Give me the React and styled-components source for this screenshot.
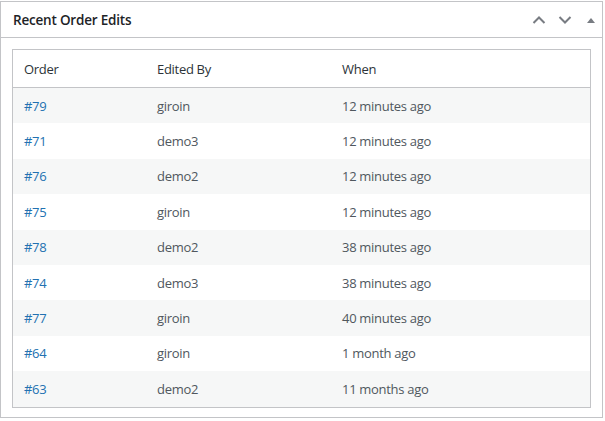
import React from "react";
import styled, { createGlobalStyle } from "styled-components";

const GlobalStyle = createGlobalStyle`
  body {
    margin: 0;
    background: #fff;
    font-family: "Open Sans", "Noto Sans", sans-serif;
  }
`;

const Postbox = styled.div`
  box-sizing: border-box;
  margin-top: 1px;
  width: 603px;
  height: 417px;
  border: 1px solid #c3c4c7;
  background: #fff;
`;

const Header = styled.div`
  display: flex;
  align-items: center;
  justify-content: space-between;
  height: 35px;
  border-bottom: 1px solid #c3c4c7;
  padding: 0 0 0 12px;
`;

const Title = styled.h2`
  margin: 0;
  font-size: 13.5px;
  font-weight: 600;
  color: #1d2327;
  letter-spacing: -0.2px;
`;

const Handles = styled.div`
  display: flex;
  align-items: center;
  gap: 4px;
`;

const HandleButton = styled.button`
  width: 22px;
  height: 26px;
  padding: 0;
  border: 0;
  background: none;
  display: flex;
  align-items: center;
  justify-content: center;
  color: #787c82;
`;

const Inside = styled.div`
  padding: 11px 11px;
`;

const Table = styled.table`
  width: 100%;
  border-collapse: collapse;
  border: 1px solid #c3c4c7;
  font-size: 13px;
  color: #50575e;
  letter-spacing: -0.3px;
`;

const Th = styled.th`
  text-align: left;
  font-weight: 400;
  color: #2c3338;
  height: 37px;
  padding: 0 11px;
  border-bottom: 1px solid #c3c4c7;
  width: ${(p) => p.$w || "auto"};
`;

const Row = styled.tr`
  background: ${(p) => (p.$alt ? "#f6f7f7" : "#fff")};
`;

const Td = styled.td`
  height: 35.4px;
  padding: 0 11px;
`;

const Link = styled.a`
  color: #2271b1;
  text-decoration: none;
`;

const rows = [
  ["#79", "giroin", "12 minutes ago"],
  ["#71", "demo3", "12 minutes ago"],
  ["#76", "demo2", "12 minutes ago"],
  ["#75", "giroin", "12 minutes ago"],
  ["#78", "demo2", "38 minutes ago"],
  ["#74", "demo3", "38 minutes ago"],
  ["#77", "giroin", "40 minutes ago"],
  ["#64", "giroin", "1 month ago"],
  ["#63", "demo2", "11 months ago"],
];

export default function App() {
  return (
    <>
      <GlobalStyle />
      <Postbox>
        <Header>
          <Title>Recent Order Edits</Title>
          <Handles>
            <HandleButton aria-label="Move up">
              <svg width="14" height="14" viewBox="0 0 14 14">
                <path d="M1.5 10 L7 4.5 L12.5 10" fill="none" stroke="currentColor" strokeWidth="2" />
              </svg>
            </HandleButton>
            <HandleButton aria-label="Move down">
              <svg width="14" height="14" viewBox="0 0 14 14">
                <path d="M1.5 4 L7 9.5 L12.5 4" fill="none" stroke="currentColor" strokeWidth="2" />
              </svg>
            </HandleButton>
            <HandleButton aria-label="Toggle panel">
              <svg width="10" height="10" viewBox="0 0 10 10">
                <path d="M1 8 L5 3 L9 8 Z" fill="currentColor" />
              </svg>
            </HandleButton>
          </Handles>
        </Header>
        <Inside>
          <Table>
            <thead>
              <tr>
                <Th $w="111px">Order</Th>
                <Th $w="163px">Edited By</Th>
                <Th>When</Th>
              </tr>
            </thead>
            <tbody>
              {rows.map((r, i) => (
                <Row key={r[0]} $alt={i % 2 === 0}>
                  <Td>
                    <Link href="#">{r[0]}</Link>
                  </Td>
                  <Td>{r[1]}</Td>
                  <Td>{r[2]}</Td>
                </Row>
              ))}
            </tbody>
          </Table>
        </Inside>
      </Postbox>
    </>
  );
}
